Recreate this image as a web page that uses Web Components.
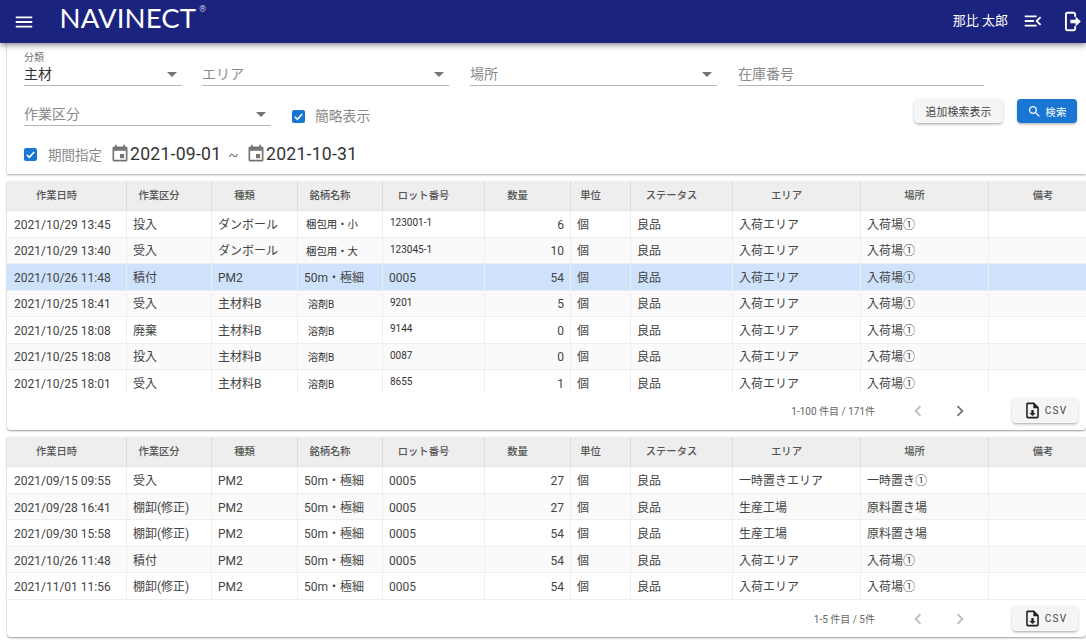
<!DOCTYPE html>
<html lang="ja"><head><meta charset="utf-8"><title>NAVINECT</title>
<style>
html,body{margin:0;padding:0;height:100%;overflow:hidden;background:#fff;font-family:Roboto,"Noto Sans CJK JP",sans-serif;color:#444}
nv-table{margin-top:7px}
</style></head><body>
<nv-app>
  <nv-appbar user="那比 太郎"></nv-appbar>
  <nv-filter></nv-filter>
  <nv-table data-set="a" pager="1-100 件目 / 171件" scroll-height="181" foot="38" pad="1.6"></nv-table>
  <nv-table data-set="b" pager="1-5 件目 / 5件" next-off foot="37" pad="2.6"></nv-table>
</nv-app>
<script>
const ICON={
menu:'<path d="M3 18h18v-2H3v2zm0-5h18v-2H3v2zm0-7v2h18V6H3z"/>',
menuopen:'<path d="M3 18h13v-2H3v2zm0-5h10v-2H3v2zm0-7v2h13V6H3zm18 9.59L17.42 12 21 8.41 19.59 7l-5 5 5 5L21 15.59z"/>',
event:'<path d="M17 12h-5v5h5v-5zM16 1v2H8V1H6v2H5c-1.11 0-1.99.9-1.99 2L3 19c0 1.1.89 2 2 2h14c1.1 0 2-.9 2-2V5c0-1.1-.9-2-2-2h-1V1h-2zm3 18H5V8h14v11z"/>',
search:'<path d="M15.5 14h-.79l-.28-.27C15.41 12.59 16 11.11 16 9.5 16 5.91 13.09 3 9.5 3S3 5.91 3 9.5 5.91 16 9.5 16c1.61 0 3.09-.59 4.23-1.57l.27.28v.79l5 4.99L20.49 19l-4.99-5zm-6 0C7.01 14 5 11.99 5 9.5S7.01 5 9.5 5 14 7.01 14 9.5 11.99 14 9.5 14z"/>',
left:'<path d="M15.41 7.41L14 6l-6 6 6 6 1.41-1.41L10.83 12z"/>',
right:'<path d="M10 6L8.59 7.41 13.17 12l-4.58 4.59L10 18l6-6z"/>',
logout:'<path d="M15 6.500V3.800A1.800 1.800 0 0 0 13.200 2H6.300A1.800 1.800 0 0 0 4.500 3.800v16.400A1.800 1.800 0 0 0 6.300 22h6.900a1.800 1.800 0 0 0 1.800-1.800v-2.700" fill="none" stroke="currentColor" stroke-width="2.200"/><path d="M9.500 10h6V6.200l6 5.800-6 5.800V14h-6z"/>',
filedown:'<path d="M14 2H6c-1.100 0-2 .9-2 2v16c0 1.100.9 2 2 2h12c1.100 0 2-.9 2-2V8l-6-6zm4 18H6V4h7v5h5v11z"/><path d="M10.500 11.500h3V15h2.500L12 19l-4-4h2.500z"/>'
};
const svg=(n,s)=>`<svg width="${s}" height="${s}" viewBox="0 0 24 24" fill="currentColor" style="display:block;flex:none">${ICON[n]}</svg>`;
function def(name,html,init){
  customElements.define(name,class extends HTMLElement{
    constructor(){super();this.attachShadow({mode:'open'})}
    connectedCallback(){this.shadowRoot.innerHTML=typeof html==='function'?html(this):html;if(init)init(this)}
  });
}
def('nv-app',`<style>:host{display:block}</style><slot></slot>`);
def('nv-appbar',el=>`<style>
:host{display:flex;align-items:center;height:43px;background:#1a237e;color:#fff;box-shadow:0 2px 4px -1px rgba(0,0,0,.3),0 4px 5px rgba(0,0,0,.14),0 1px 10px rgba(0,0,0,.12);position:relative;z-index:2;box-sizing:border-box;padding:0 3px 0 13px}
.logo{font:400 27.500px/1 Lato,sans-serif;margin-left:24.500px;margin-top:-8px;letter-spacing:.15px;display:flex;align-items:flex-start}
sup{font:400 8.500px/1 Roboto,sans-serif;margin:1px 0 0 3px;color:#c9cbe4}
.sp{flex:1}
.user{font:400 13px/1 Roboto,"Noto Sans CJK JP",sans-serif;margin-right:14px;margin-top:-2px}
.ic{margin-top:-1px}
.out{margin-left:18px;margin-top:-1px}
</style>${svg('menu',22)}<div class="logo">NAVINECT<sup>®</sup></div><div class="sp"></div><div class="user">${el.getAttribute('user')}</div><div class="ic">${svg('menuopen',22)}</div><div class="out">${svg('logout',21)}</div>`);
def('nv-select',el=>`<style>
:host{display:flex;flex-direction:column;justify-content:flex-end;box-sizing:border-box;border-bottom:1px solid #b5b5b5;position:relative;width:${el.getAttribute('w')}px;height:35px}
.lab{font-size:10px;line-height:12px;color:#777;height:12px}
.val{font-size:14px;line-height:21px;height:21px;color:${el.hasAttribute('set')?'#333':'#8a8a8a'}}
.arrow{position:absolute;right:5px;bottom:8px;width:0;height:0;border:5px solid transparent;border-top-color:#757575;border-bottom-width:0}
</style>${el.getAttribute('label')?`<div class="lab">${el.getAttribute('label')}</div>`:''}<div class="val"><slot></slot></div>${el.hasAttribute('noarrow')?'':'<div class="arrow"></div>'}`);
def('nv-check',el=>`<style>
:host{display:inline-flex;align-items:center;gap:${el.getAttribute('gap')||11}px;font-size:${el.getAttribute('fs')||14}px;color:#8a8a8a}
.b{width:13px;height:13px;background:#1976d2;border-radius:2px;display:flex;align-items:center;justify-content:center;flex:none;margin-top:${el.getAttribute('drop')||0}px}
</style><span class="b"><svg width="11" height="11" viewBox="0 0 24 24"><path d="M4 12.500l5.500 5.500L20 6.500" fill="none" stroke="#fff" stroke-width="3.400"/></svg></span><slot></slot>`);
def('nv-date',el=>`<style>
:host{display:inline-flex;align-items:center;gap:.5px;font-size:17.600px;color:#333;letter-spacing:.25px}
.i{color:#757575}
</style><span class="i">${svg('event',20)}</span><slot></slot>`);
def('nv-btn',el=>`<style>
:host{display:inline-flex;align-items:center;justify-content:center;box-sizing:border-box;height:${el.getAttribute('h')||24}px;border-radius:4px;font-size:${el.getAttribute('fs')||11}px;letter-spacing:.2px;gap:3px;width:${el.getAttribute('w')}px;
box-shadow:0 2px 3px -1px rgba(0,0,0,.25),0 1px 3px rgba(0,0,0,.14);
background:${el.hasAttribute('primary')?'#1976d2':'#f5f5f5'};color:${el.hasAttribute('primary')?'#fff':'#444'}}
.i{color:${el.hasAttribute('primary')?'#fff':'#222'}}
</style>${el.getAttribute('icon')?`<span class="i">${svg(el.getAttribute('icon'),+el.getAttribute('is')||16)}</span>`:''}<slot></slot>`);
def('nv-filter',`<style>
:host{display:block;margin-left:7px;box-sizing:border-box;height:131px;padding:8px 9px 0 17px;background:#fff;box-shadow:0 1px 2px rgba(0,0,0,.35);position:relative;z-index:1}
.r{display:flex;align-items:flex-end}
.r1{gap:21px}
.r1 nv-select:first-child{margin-right:-1px}
.r2{margin-top:5px;height:35px}
.r3{margin-top:18px;align-items:center;height:20px}
.sp{flex:1}
nv-check.c1{margin:0 0 0 21px;align-self:flex-end;padding-bottom:1px}
.btns{display:flex;gap:14px;align-self:flex-start;margin-top:8px}
.tilde{font-size:15px;color:#777;margin:0 7px 0 7px;line-height:1;padding-top:2px}
</style>
<div class="r r1"><nv-select w="158" label="分類" set>主材</nv-select><nv-select w="247">エリア</nv-select><nv-select w="247">場所</nv-select><nv-select w="246" noarrow>在庫番号</nv-select></div>
<div class="r r2"><nv-select w="247">作業区分</nv-select><nv-check class="c1" gap="10" fs="13.800" drop="2">簡略表示</nv-check><span class="sp"></span><div class="btns"><nv-btn w="89" fs="10.800">追加検索表示</nv-btn><nv-btn w="60" primary icon="search" is="15" fs="10.500">検索</nv-btn></div></div>
<div class="r r3"><nv-check fs="13.500">期間指定</nv-check><span style="width:7.500px"></span><nv-date>2021-09-01</nv-date><span class="tilde">~</span><nv-date>2021-10-31</nv-date></div>`);
const HEAD=['作業日時','作業区分','種類','銘柄名称','ロット番号','数量','単位','ステータス','エリア','場所','備考'];
const D=(t,k,ty,n,l,q,a,p,cls)=>({t,k,ty,n,l,q,a,p,cls});
const DATA={
a:[
D('2021/10/29 13:45','投入','ダンボール','梱包用・小','123001-1','6','入荷エリア','入荷場①'),
D('2021/10/29 13:40','受入','ダンボール','梱包用・大','123045-1','10','入荷エリア','入荷場①'),
D('2021/10/26 11:48','積付','PM2','50m・極細','0005','54','入荷エリア','入荷場①','sel'),
D('2021/10/25 18:41','受入','主材料B','溶剤B','9201','5','入荷エリア','入荷場①'),
D('2021/10/25 18:08','廃棄','主材料B','溶剤B','9144','0','入荷エリア','入荷場①'),
D('2021/10/25 18:08','投入','主材料B','溶剤B','0087','0','入荷エリア','入荷場①'),
D('2021/10/25 18:01','受入','主材料B','溶剤B','8655','1','入荷エリア','入荷場①')],
b:[
D('2021/09/15 09:55','受入','PM2','50m・極細','0005','27','一時置きエリア','一時置き①'),
D('2021/09/28 16:41','棚卸(修正)','PM2','50m・極細','0005','27','生産工場','原料置き場'),
D('2021/09/30 15:58','棚卸(修正)','PM2','50m・極細','0005','54','生産工場','原料置き場'),
D('2021/10/26 11:48','積付','PM2','50m・極細','0005','54','入荷エリア','入荷場①'),
D('2021/11/01 11:56','棚卸(修正)','PM2','50m・極細','0005','54','入荷エリア','入荷場①')]
};
def('nv-table',el=>{
 const cols='120px 85px 86px 85px 102px 86px 60px 102px 128px 128px 1fr';
 const pad=+el.getAttribute('pad');
 const rows=DATA[el.dataset.set].map((r,i)=>{
  const small=!/極細/.test(r.n);
  const sm=small?(/溶剤/.test(r.n)?'sm sol':'sm'):'';
  return `<div class="row ${i%2?'alt':''} ${r.cls||''}"><div class="c">${r.t}</div><div class="c">${r.k}</div><div class="c">${r.ty}</div><div class="c ${sm}">${r.n}</div><div class="c ${small?'lot':''}">${r.l}</div><div class="c num">${r.q}</div><div class="c">個</div><div class="c">良品</div><div class="c">${r.a}</div><div class="c">${r.p}</div><div class="c"></div></div>`}).join('');
 const sh=el.getAttribute('scroll-height');
 return `<style>
:host{display:block;margin-left:7px;background:#fff;border-radius:0 0 4px 4px;box-shadow:0 1px 2px rgba(0,0,0,.4)}
.head,.row{display:grid;grid-template-columns:${cols}}
.head{height:30px;box-sizing:border-box;background:#eee;border-bottom:1px solid #e4e4e4}
.h{display:flex;align-items:center;justify-content:center;font-size:10.300px;font-weight:500;color:#555;border-right:1px solid #dcdcdc;padding:0 20px 3px 0;box-sizing:border-box;white-space:nowrap}
.h:last-child{border-right:0;padding:0 0 3px 11px}
.body{height:${sh?sh+'px':'auto'};overflow:hidden}
.row{height:26.500px;box-sizing:border-box;border-bottom:1px solid #eee;background:#fff}
.alt{background:#fafafa}
.sel{background:#cfe2fb}
.c{display:flex;align-items:center;box-sizing:border-box;padding:${pad}px 8px 0 6px;font-size:12px;color:#444;border-right:1px solid #eee;white-space:nowrap;min-width:0;line-height:1}
.c:first-child{padding-left:7px}
.c:last-child{border-right:0}
.sm{font-size:10.400px;padding-left:8px;padding-top:3.600px;color:#333}
.sol{padding-left:10px;font-size:10px}
.lot{font-size:10px;padding-left:7px;padding-top:0;padding-bottom:1.400px;color:#333}
.num{justify-content:flex-end;padding-right:6px}
.foot{height:${el.getAttribute('foot')}px;display:flex;align-items:flex-start;justify-content:flex-end;padding:6px 8px 0 0;box-sizing:border-box;color:#666;font-size:10px}
.txt{margin:7px 32px 0 0;line-height:14px}
.ch{width:22px;height:22px;margin-top:2px;color:#bdbdbd}
.on{color:#757575}
.gap{width:20px}
nv-btn{margin-left:41px}
</style>
<div class="head">${HEAD.map(h=>`<div class="h">${h}</div>`).join('')}</div>
<div class="body">${rows}</div>
<div class="foot"><span class="txt">${el.getAttribute('pager')}</span><span class="ch">${svg('left',22)}</span><span class="gap"></span><span class="ch ${el.hasAttribute('next-off')?'':'on'}">${svg('right',22)}</span><nv-btn w="66" h="25" icon="filedown" is="19" fs="10"><span style="letter-spacing:1.200px">CSV</span></nv-btn></div>`;
});
</script>
</body></html>
